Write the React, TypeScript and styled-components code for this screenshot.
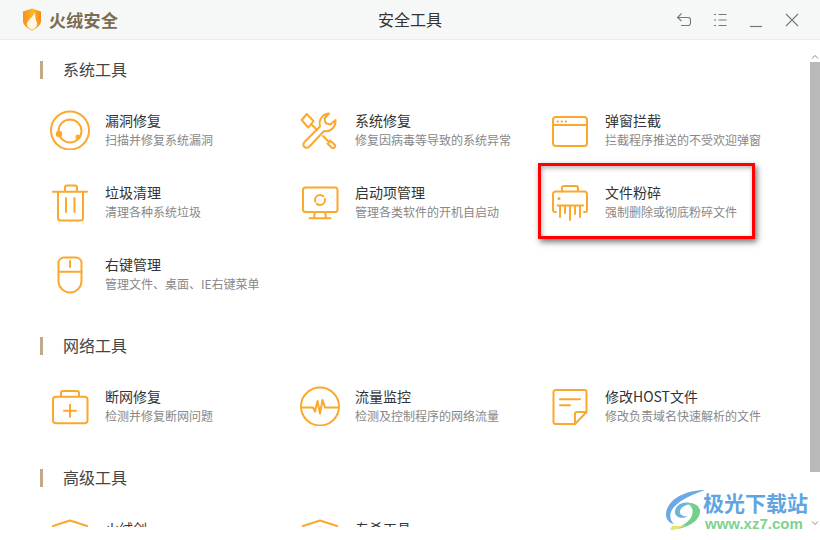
import React from 'react';
import styled, { createGlobalStyle } from 'styled-components';

const orange = '#fca82c';

const GlobalStyle = createGlobalStyle`
  html, body {
    margin: 0;
    padding: 0;
    background: #fff;
    font-family: "Noto Sans CJK SC", "Noto Sans", sans-serif;
  }
`;

function Glyph({ children }: { children: React.ReactNode }) {
  return (
    <svg width="40" height="40" viewBox="0 0 40 40" fill="none" stroke={orange} strokeWidth="2" strokeLinecap="round" strokeLinejoin="round">
      {children}
    </svg>
  );
}

const icons: Record<string, React.ReactNode> = {
  repair: (
    <Glyph>
      <circle cx="20" cy="20.5" r="19" />
      <circle cx="20" cy="21" r="11.5" />
      <circle cx="9" cy="24" r="3.2" fill={orange} stroke="none" />
      <circle cx="28" cy="27" r="2.5" fill={orange} stroke="none" />
    </Glyph>
  ),
  tools: (
    <Glyph>
      <path d="M6.7 4 13.5 11 8.3 17.7 1.7 10Z" />
      <path d="M12 15 17 20M23 26 29.5 32.5" />
      <path d="M30 30.5 34.5 34.5a2 2 0 0 1-3 3L27.5 33.5" />
      <path d="M4.5 32 20 16.500c-1.500-5.500 1-10.500 6-12.500l3-.5-4.500 5 1.200 4.800 4.800 1.200 5-4.500c.5 6.500-4.500 12.500-11.500 11L9 37a3 3 0 0 1-4.500-5Z" />
    </Glyph>
  ),
  popup: (
    <Glyph>
      <rect x="3" y="7" width="34" height="29" rx="3" />
      <path d="M3 15H37" />
      <path d="M7.500 11.500h.5M11.500 11.500h.5M15.500 11.500h.5" />
    </Glyph>
  ),
  trash: (
    <Glyph>
      <path d="M3 9.700H37" />
      <path d="M15 9V5.500a2 2 0 0 1 2-2h8a2 2 0 0 1 2 2V9" />
      <path d="M8 10V36a2.500 2.500 0 0 0 2.500 2.500h20A2.500 2.500 0 0 0 33 36V10" />
      <path d="M16 16V30M24.500 16V30" />
    </Glyph>
  ),
  monitor: (
    <Glyph>
      <rect x="3" y="5.500" width="34.500" height="24.500" rx="2.500" />
      <path d="M15 30 14 36M25 30 26 36M9.500 36.300H30.500" />
      <circle cx="20" cy="18" r="5" strokeDasharray="11 2.500 13 3" />
    </Glyph>
  ),
  shredder: (
    <Glyph>
      <path d="M12 9.500V6a2 2 0 0 1 2-2h12a2 2 0 0 1 2 2v3.500" />
      <path d="M6 30H5a2 2 0 0 1-2-2V12a2.500 2.500 0 0 1 2.500-2.500h29A2.500 2.500 0 0 1 37 12V28a2 2 0 0 1-2 2H34" />
      <path d="M7.500 23.500H33" />
      <path d="M10 24V35M15 24V31M20 24V38M25 24V32M30 24V35" />
      <circle cx="9" cy="16.500" r="1.600" fill={orange} stroke="none" />
    </Glyph>
  ),
  mouse: (
    <Glyph>
      <path d="M14 3.500H26a5.500 5.500 0 0 1 5.500 5.500V27a11.500 11.500 0 0 1-23 0V9A5.500 5.500 0 0 1 14 3.500Z" />
      <path d="M8.500 17.700H31.500M20 7V13" />
    </Glyph>
  ),
  kit: (
    <Glyph>
      <rect x="3" y="10.700" width="34.500" height="26.500" rx="3" />
      <path d="M11 10V7a2 2 0 0 1 2-2h14a2 2 0 0 1 2 2v3" />
      <path d="M14 24.700H26M20 18.700V30.700" />
    </Glyph>
  ),
  pulse: (
    <Glyph>
      <circle cx="20" cy="20.500" r="19" />
      <path d="M1.500 21.500H13L15 25.500 17.500 15 20 27.500 22.500 14 25 21.500H38.500" />
    </Glyph>
  ),
  note: (
    <Glyph>
      <path d="M5.500 4H34.500a2 2 0 0 1 2 2V26L25 38H5.500a2 2 0 0 1-2-2V6a2 2 0 0 1 2-2Z" />
      <path d="M36 26H27a2 2 0 0 0-2 2V37.500" />
      <path d="M10 13.300H30M10 19.300H20" />
    </Glyph>
  ),
  shield: (
    <Glyph>
      <path d="M3 8 20 2.500 37 8V22C37 30 28 35 20 38 12 35 3 30 3 22Z" />
    </Glyph>
  ),
  shieldKey: (
    <Glyph>
      <path d="M3 8 20 2.500 37 8V22C37 30 28 35 20 38 12 35 3 30 3 22Z" />
      <circle cx="20" cy="15" r="5.500" />
    </Glyph>
  ),
};

type Tool = { icon: string; name: string; desc?: string; marked?: boolean };

const sections: { title: string; items: Tool[] }[] = [
  {
    title: '系统工具',
    items: [
      { icon: 'repair', name: '漏洞修复', desc: '扫描并修复系统漏洞' },
      { icon: 'tools', name: '系统修复', desc: '修复因病毒等导致的系统异常' },
      { icon: 'popup', name: '弹窗拦截', desc: '拦截程序推送的不受欢迎弹窗' },
      { icon: 'trash', name: '垃圾清理', desc: '清理各种系统垃圾' },
      { icon: 'monitor', name: '启动项管理', desc: '管理各类软件的开机自启动' },
      { icon: 'shredder', name: '文件粉碎', desc: '强制删除或彻底粉碎文件', marked: true },
      { icon: 'mouse', name: '右键管理', desc: '管理文件、桌面、IE右键菜单' },
    ],
  },
  {
    title: '网络工具',
    items: [
      { icon: 'kit', name: '断网修复', desc: '检测并修复断网问题' },
      { icon: 'pulse', name: '流量监控', desc: '检测及控制程序的网络流量' },
      { icon: 'note', name: '修改HOST文件', desc: '修改负责域名快速解析的文件' },
    ],
  },
  {
    title: '高级工具',
    items: [
      { icon: 'shield', name: '火绒剑' },
      { icon: 'shieldKey', name: '专杀工具' },
    ],
  },
];

export default function App() {
  return (
    <Page>
      <GlobalStyle />
      <TitleBar>
        <Brand>
          <svg width="20" height="23" viewBox="0 0 20 23">
            <defs>
              <linearGradient id="shieldFill" x1="0" y1="0.5" x2="1" y2="0.5">
                <stop offset="0" stopColor="#f7901c" />
                <stop offset="0.55" stopColor="#ffb51f" />
                <stop offset="1" stopColor="#f58a1a" />
              </linearGradient>
            </defs>
            <path d="M1 3.500 10 .5l9 3v9.500C19 17 14.500 20.500 10 22.500 5.500 20.500 1 17 1 13Z" fill="url(#shieldFill)" />
            <path d="M12 4C13 8.500 5.500 11 5 16c-.3 2.800 2.500 4.800 5 5.500 3-.7 5.500-3 5-6.500-.3-2-1.800-2.500-1.500-5 .2-1.800-.5-4-1.500-6Z" fill="#fff6e8" />
          </svg>
          <BrandName>火绒安全</BrandName>
        </Brand>
        <WindowTitle>安全工具</WindowTitle>
        <Controls>
          <ControlButton>
            <svg width="18" height="18" viewBox="0 0 18 18" fill="none" stroke="#777" strokeWidth="1.100">
              <path d="M6.500 2.500 2.500 6.500 6.500 10" />
              <path d="M3 6.500H13a2.500 2.500 0 0 1 2.500 2.500V12A2.500 2.500 0 0 1 13 14.500H6" />
            </svg>
          </ControlButton>
          <ControlButton>
            <svg width="18" height="18" viewBox="0 0 18 18" fill="none" stroke="#777" strokeWidth="1.100">
              <path d="M3 3.500H5M7.500 3.500H15.500M3 9H5M7.500 9H15.500M3 14.500H5M7.500 14.500H15.500" />
            </svg>
          </ControlButton>
          <ControlButton>
            <svg width="18" height="18" viewBox="0 0 18 18" fill="none" stroke="#777" strokeWidth="1.200">
              <path d="M3 15.500H15" />
            </svg>
          </ControlButton>
          <ControlButton>
            <svg width="18" height="18" viewBox="0 0 18 18" fill="none" stroke="#777" strokeWidth="1.100">
              <path d="M3 3 15 15M15 3 3 15" />
            </svg>
          </ControlButton>
        </Controls>
      </TitleBar>
      <Body>
        <Content>
          {sections.map((section) => (
            <Section key={section.title}>
              <SectionTitle>{section.title}</SectionTitle>
              <ItemGrid>
                {section.items.map((item) => (
                  <Item key={item.name} $marked={item.marked}>
                    <IconBox>{icons[item.icon]}</IconBox>
                    <ItemText>
                      <ItemName>{item.name}</ItemName>
                      {item.desc && <ItemDesc>{item.desc}</ItemDesc>}
                    </ItemText>
                  </Item>
                ))}
              </ItemGrid>
            </Section>
          ))}
        </Content>
        <ScrollBar>
          <ScrollArrowUp>
            <svg width="10" height="6" viewBox="0 0 10 6" fill="none" stroke="#888">
              <path d="M2 4.500 5 1.500 8 4.500" />
            </svg>
          </ScrollArrowUp>
          <ScrollThumb />
          <ScrollArrowDown>
            <svg width="10" height="6" viewBox="0 0 10 6" fill="none" stroke="#888">
              <path d="M2 1.500 5 4.500 8 1.500" />
            </svg>
          </ScrollArrowDown>
        </ScrollBar>
      </Body>
      <Watermark>
        <svg width="46" height="44" viewBox="0 0 46 44">
          <path d="M45 1C30 1 12 7 7 20 4 28 8 34 14 35 9 30 9 24 14 18 21 10 34 5 45 1Z" fill="#6aa9e4" />
          <path d="M33 15C25 11 16 15 15 22 14 28 22 31 28 27 24 28 19 26 20 22 21 17 28 15 33 15Z" fill="#6fb3d9" />
          <path d="M26 14C35 13 41 18 40 24 38 33 27 39 16 40 22 36 30 33 32 26 34 20 31 16 26 14Z" fill="#74cf8c" />
          <path d="M10 41C15 41 21 39 26 36 21 37 16 37 12 37Z" fill="#e5e46a" />
        </svg>
        <WatermarkText>
          <WatermarkName>极光下载站</WatermarkName>
          <WatermarkUrl>www.xz7.com</WatermarkUrl>
        </WatermarkText>
      </Watermark>
    </Page>
  );
}

const Page = styled.div`
  position: relative;
  width: 820px;
  height: 540px;
  overflow: hidden;
  background: #fff;
`;

const TitleBar = styled.header`
  display: grid;
  grid-template-columns: 1fr auto 1fr;
  align-items: center;
  height: 39px;
  background: #f6f8f7;
  border-bottom: 1px solid #ececec;
`;

const Brand = styled.div`
  display: flex;
  align-items: center;
  gap: 7px;
  padding-left: 22px;
`;

const BrandName = styled.span`
  font-size: 17px;
  font-weight: 700;
  letter-spacing: 0.3px;
  color: #7b6b50;
`;

const WindowTitle = styled.div`
  font-size: 16px;
  color: #333;
  padding-bottom: 2px;
`;

const Controls = styled.div`
  display: flex;
  justify-content: flex-end;
  padding-right: 10px;
`;

const ControlButton = styled.div`
  display: flex;
  align-items: center;
  justify-content: center;
  width: 36px;
  height: 39px;
`;

const Body = styled.main`
  display: flex;
  height: 487px;
`;

const Content = styled.div`
  flex: 1;
  overflow: hidden;
  padding: 21px 0 0 40px;
`;

const Section = styled.section`
  margin-bottom: 27px;
`;

const SectionTitle = styled.h2`
  display: flex;
  align-items: center;
  box-sizing: border-box;
  height: 18px;
  margin: 0;
  padding: 0 0 2px 20px;
  border-left: 3px solid #c2a987;
  font-size: 16px;
  font-weight: 400;
  color: #444;
`;

const ItemGrid = styled.div`
  display: grid;
  grid-template-columns: repeat(3, 250px);
  grid-auto-rows: 72px;
  margin-top: 15px;
  padding-left: 10px;
`;

const Item = styled.div<{ $marked?: boolean }>`
  position: relative;
  display: flex;
  align-items: center;
  gap: 15px;

  ${({ $marked }) =>
    $marked &&
    `
    &::after {
      content: '';
      position: absolute;
      left: -12px;
      top: -3px;
      width: 217px;
      height: 76px;
      box-sizing: border-box;
      border: 3px solid #f00;
      box-shadow: 2px 3px 6px rgba(0, 0, 0, 0.55), inset 1px 2px 5px rgba(0, 0, 0, 0.3);
    }
  `}
`;

const IconBox = styled.div`
  display: flex;
  flex: none;
  width: 40px;
  height: 40px;
`;

const ItemText = styled.div`
  display: flex;
  flex-direction: column;
  align-self: flex-start;
  padding-top: 16px;
`;

const ItemName = styled.div`
  font-size: 14px;
  line-height: 20px;
  color: #333;
`;

const ItemDesc = styled.div`
  font-size: 12px;
  line-height: 20px;
  color: #888;
  white-space: nowrap;
`;

const ScrollBar = styled.div`
  display: flex;
  flex: none;
  flex-direction: column;
  align-items: center;
  width: 10px;
`;

const ScrollArrowUp = styled.div`
  display: flex;
  flex: none;
  align-items: flex-end;
  justify-content: center;
  box-sizing: border-box;
  height: 22px;
  padding-bottom: 2px;
`;

const ScrollThumb = styled.div`
  flex: none;
  width: 10px;
  height: 410px;
  background: #b9b9b9;
`;

const ScrollArrowDown = styled.div`
  display: flex;
  flex: 1;
  align-items: flex-end;
  justify-content: center;
  padding-bottom: 1px;
`;

const Watermark = styled.div`
  position: absolute;
  left: 660px;
  top: 489px;
  display: flex;
`;

const WatermarkText = styled.div`
  display: flex;
  flex-direction: column;
  margin-left: -3px;
`;

const WatermarkName = styled.div`
  font-size: 21px;
  line-height: 26px;
  font-weight: 700;
  color: #5ea5e2;
  text-shadow: 0 0 2px #fff;
`;

const WatermarkUrl = styled.div`
  font-family: "Liberation Sans", sans-serif;
  font-size: 15px;
  line-height: 16px;
  margin-top: 1px;
  font-weight: 700;
  color: #7ed28f;
  padding-left: 2px;
`;
